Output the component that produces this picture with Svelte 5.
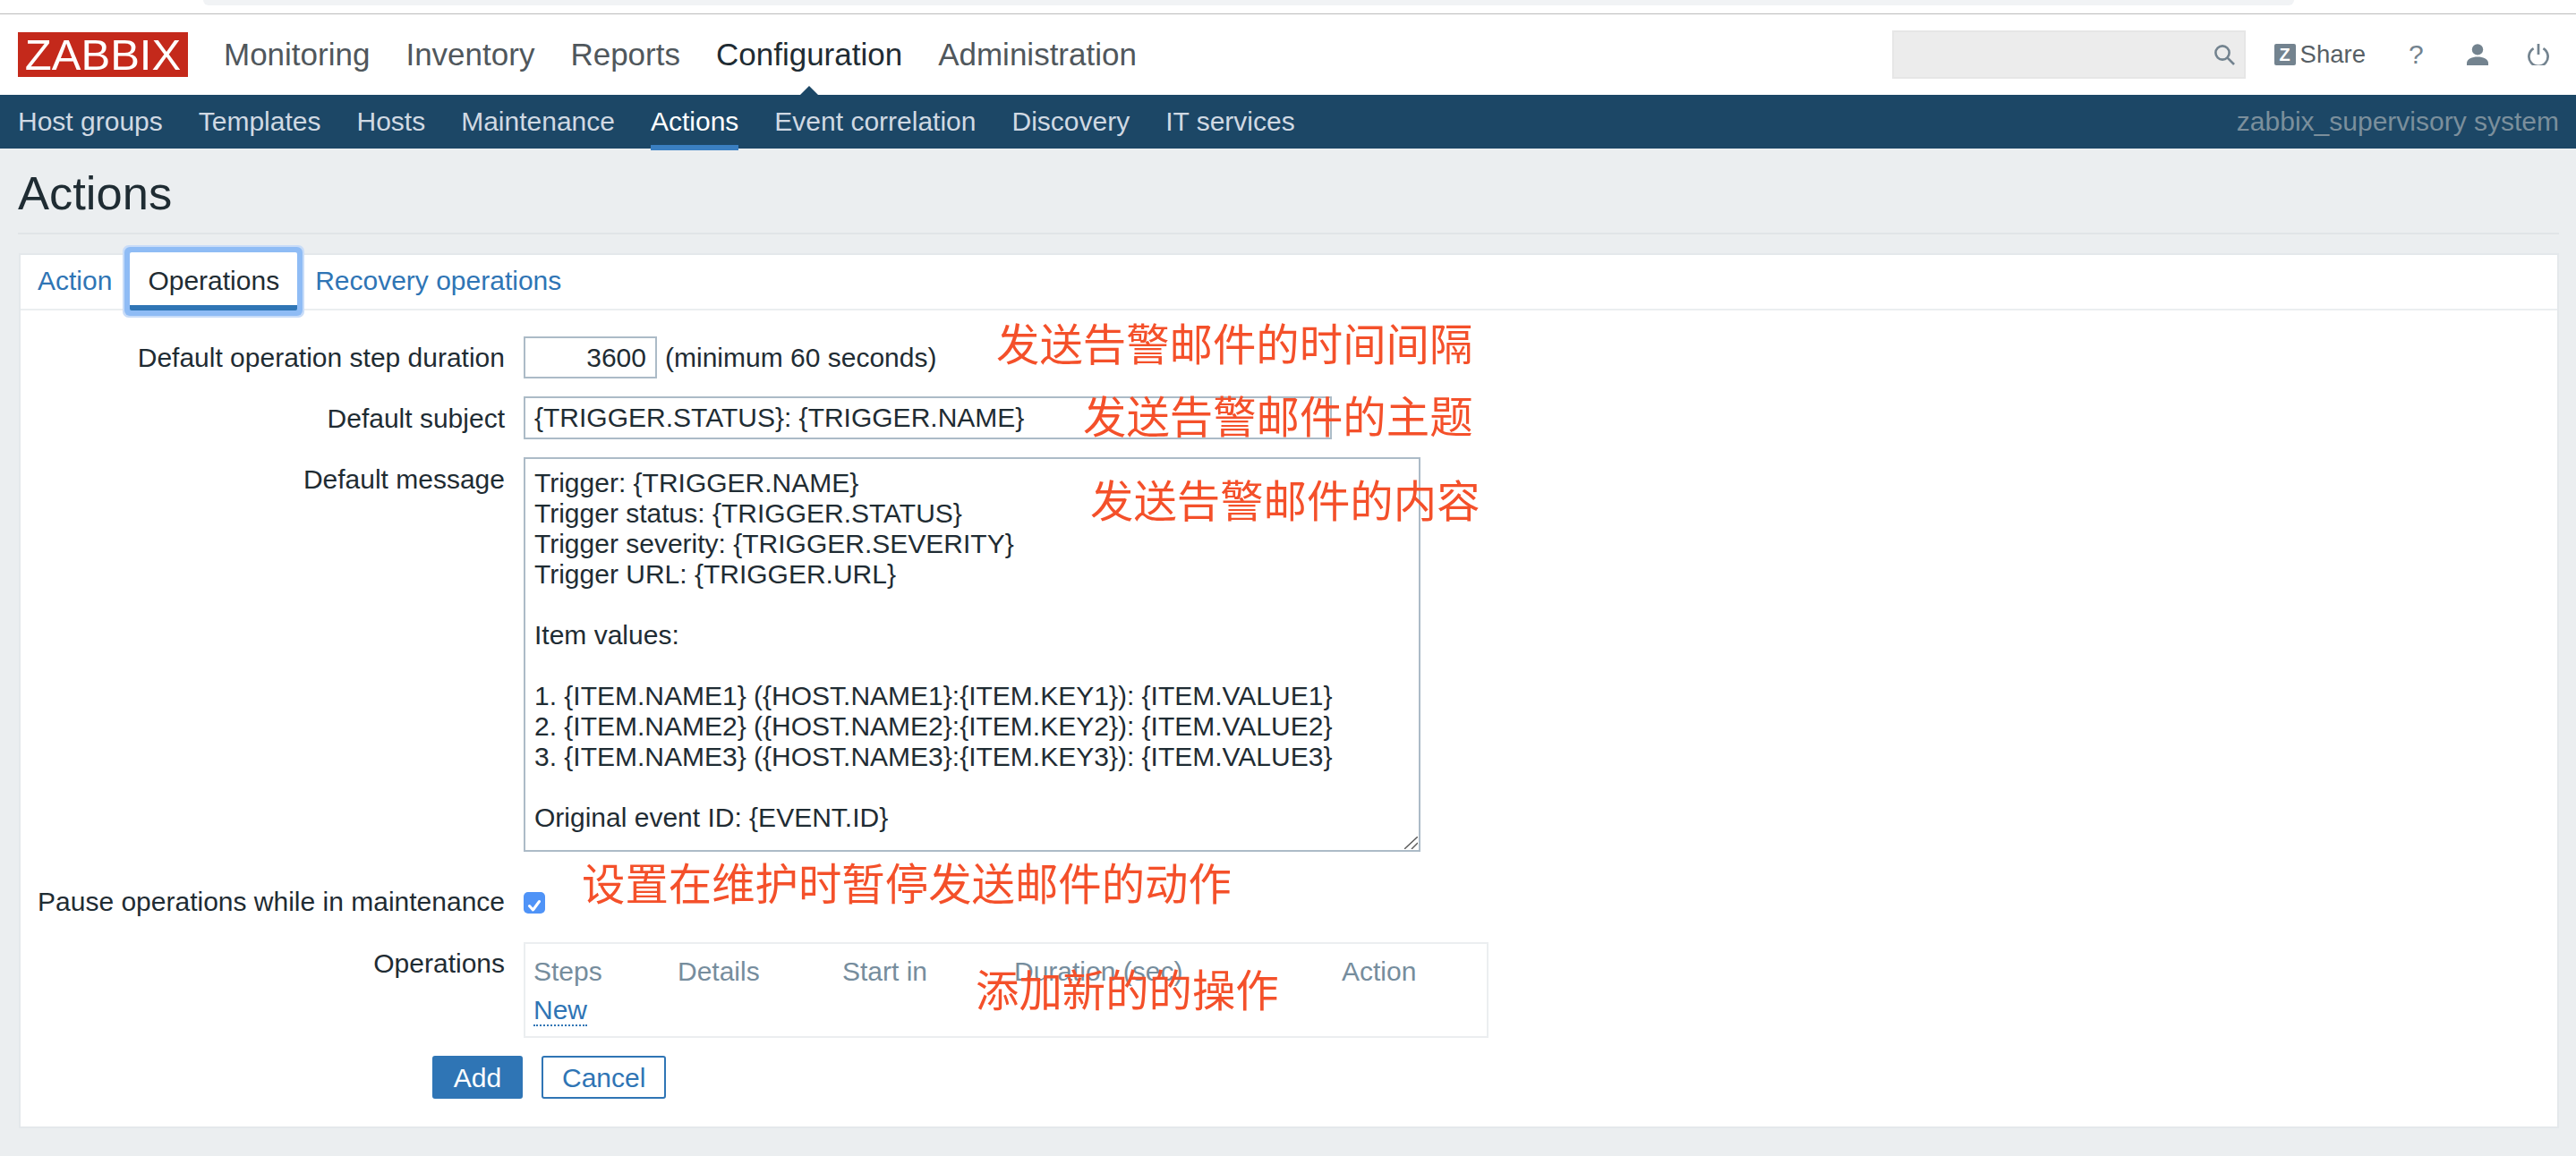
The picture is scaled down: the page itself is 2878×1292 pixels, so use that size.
<script>
  const mainMenu = ['Monitoring', 'Inventory', 'Reports', 'Configuration', 'Administration'];
  const subMenu = ['Host groups', 'Templates', 'Hosts', 'Maintenance', 'Actions', 'Event correlation', 'Discovery', 'IT services'];
  const columns = [
    { label: 'Steps', width: 161 },
    { label: 'Details', width: 184 },
    { label: 'Start in', width: 192 },
    { label: 'Duration (sec)', width: 366 },
    { label: 'Action', width: 150 }
  ];

  const message = `Trigger: {TRIGGER.NAME}
Trigger status: {TRIGGER.STATUS}
Trigger severity: {TRIGGER.SEVERITY}
Trigger URL: {TRIGGER.URL}

Item values:

1. {ITEM.NAME1} ({HOST.NAME1}:{ITEM.KEY1}): {ITEM.VALUE1}
2. {ITEM.NAME2} ({HOST.NAME2}:{ITEM.KEY2}): {ITEM.VALUE2}
3. {ITEM.NAME3} ({HOST.NAME3}:{ITEM.KEY3}): {ITEM.VALUE3}

Original event ID: {EVENT.ID}`;

  // hand-written notes laid over the screenshot
  const notes = [
    { text: '发送告警邮件的时间间隔', x: 1113, y: 382 },
    { text: '发送告警邮件的主题', x: 1210, y: 463 },
    { text: '发送告警邮件的内容', x: 1218, y: 557 },
    { text: '设置在维护时暂停发送邮件的动作', x: 650, y: 985 },
    { text: '添加新的的操作', x: 1090, y: 1104 }
  ];
</script>

<div class="page">
  <div class="browserStrip"><div class="urlBar"></div></div>

  <header class="topNav">
    <div class="logo">ZABBIX</div>
    <nav class="mainMenu">
      {#each mainMenu as item}
        <span class="mainItem" class:current={item === 'Configuration'}>{item}</span>
      {/each}
    </nav>
    <div class="tools">
      <div class="search">
        <svg viewBox="0 0 24 24" width="24" height="24" fill="none" stroke="#73838f" stroke-width="2.6">
          <circle cx="10" cy="10" r="7.6" />
          <path d="M15.4 15.4 23 23" />
        </svg>
      </div>
      <span class="share">
        <span class="shareBox">Z</span>Share
      </span>
      <span class="help">?</span>
      <svg class="toolIcon" viewBox="0 0 24 24" width="24" height="24" fill="#73838f">
        <circle cx="12" cy="6.4" r="6.2" />
        <path d="M0 24v-2.4C0 17 6 14.6 12 14.6s12 2.4 12 7V24z" />
      </svg>
      <svg class="toolIcon" viewBox="0 0 24 24" width="24" height="24" fill="none" stroke="#73838f" stroke-width="2.7">
        <path d="M6.6 5.2a10.6 10.6 0 1 0 10.8 0" />
        <path d="M12 0v12" />
      </svg>
    </div>
  </header>

  <nav class="subNav">
    {#each subMenu as item}
      <span class="subItem" class:current={item === 'Actions'}>{item}</span>
    {/each}
    <span class="serverName">zabbix_supervisory system</span>
  </nav>

  <main class="content">
    <div class="titleRow"><h1>Actions</h1></div>

    <section class="card">
      <div class="tabs">
        <span class="tab">Action</span>
        <span class="tab focused">Operations</span>
        <span class="tab">Recovery operations</span>
      </div>

      <form class="form" on:submit|preventDefault>
        <div class="row">
          <label class="firstLabel" for="stepDuration">Default operation step duration</label>
          <div class="control">
            <input id="stepDuration" class="stepInput" value="3600" />
            <span class="hint">(minimum 60 seconds)</span>
          </div>
        </div>
        <div class="row">
          <label for="subject">Default subject</label>
          <input id="subject" class="subjectInput" value={'{TRIGGER.STATUS}: {TRIGGER.NAME}'} />
        </div>
        <div class="row">
          <label for="messageText">Default message</label>
          <div class="messageBox">
            <textarea id="messageText" class="messageInput" spellcheck="false" value={message}></textarea>
            <svg class="resizer" viewBox="0 0 15 14" width="15" height="14" fill="none" stroke="#5a5a5a" stroke-width="1.4">
              <path d="M0 14 15 0" />
              <path d="M8 14 15 7" />
            </svg>
          </div>
        </div>
        <div class="row pauseRow">
          <label for="pause">Pause operations while in maintenance</label>
          <span id="pause" class="checkbox">
            <svg viewBox="0 0 24 24" width="24" height="24" fill="none" stroke="#fff" stroke-width="3" stroke-linecap="round" stroke-linejoin="round">
              <path d="M6.5 12.5 10.5 17 17.5 7.5" />
            </svg>
          </span>
        </div>
        <div class="row">
          <label class="firstLabel" for="operationsList">Operations</label>
          <div id="operationsList" class="opsTable">
            <div class="opsHead">
              {#each columns as col}
                <span class="opsCol" style="width: {col.width}px">{col.label}</span>
              {/each}
            </div>
            <span class="newLink">New</span>
          </div>
        </div>
        <div class="row">
          <span></span>
          <div class="buttons">
            <button type="submit" class="btn primary">Add</button>
            <button type="button" class="btn">Cancel</button>
          </div>
        </div>
      </form>
    </section>
  </main>

  {#each notes as note}
    <span class="note" style="left: {note.x}px; top: {note.y}px">{note.text}</span>
  {/each}
</div>

<style>
  :global(body) {
    margin: 0;
    background: #ebeef0;
  }

  .page {
    position: relative;
    width: 2878px;
    height: 1292px;
    overflow: hidden;
    background: #ebeef0;
    color: #1f2c33;
    font-family: 'Liberation Sans', Arial, sans-serif;
    font-size: 30px;
  }

  .browserStrip {
    height: 15px;
    padding-left: 227px;
    background: #fff;
    border-bottom: 1px solid #bcbcbc;
  }

  .urlBar {
    width: 2336px;
    height: 6px;
    background: #f1f3f5;
    border-radius: 0 0 14px 14px;
  }

  .topNav {
    display: flex;
    align-items: center;
    height: 90px;
    padding: 0 30px 0 20px;
    background: #fff;
  }

  .logo {
    width: 190px;
    height: 50px;
    background: #c4291b;
    color: #fff;
    font-size: 49px;
    line-height: 50px;
    text-align: center;
  }

  .mainMenu {
    display: flex;
    gap: 40px;
    margin-left: 40px;
    font-size: 35px;
    color: #50575c;
  }

  .mainItem.current {
    position: relative;
    color: #1f2c33;
  }

  .mainItem.current::after {
    content: '';
    position: absolute;
    left: 50%;
    bottom: -31px;
    margin-left: -16px;
    border: 16px solid transparent;
    border-top: 0;
    border-bottom-color: #1c4766;
  }

  .tools {
    display: flex;
    align-items: center;
    margin-left: auto;
  }

  .search {
    display: flex;
    align-items: center;
    justify-content: flex-end;
    box-sizing: border-box;
    width: 395px;
    height: 54px;
    padding-right: 10px;
    background: #ececec;
    border: 2px solid #e6e6e6;
  }

  .share {
    display: flex;
    align-items: center;
    margin-left: 32px;
    font-size: 27.5px;
    color: #575f65;
  }

  .shareBox {
    width: 24px;
    height: 24px;
    margin-right: 5px;
    background: #73838f;
    border-radius: 2px;
    color: #fff;
    font-size: 20px;
    font-weight: bold;
    line-height: 24px;
    text-align: center;
  }

  .help {
    margin-left: 48px;
    width: 18px;
    font-size: 30px;
    color: #73838f;
  }

  .toolIcon {
    margin-left: 44px;
  }

  .help + .toolIcon {
    margin-left: 47px;
  }

  .subNav {
    display: flex;
    align-items: center;
    gap: 40px;
    height: 60px;
    padding: 0 19px 0 20px;
    background: #1c4766;
    color: #d0d9e3;
  }

  .subItem {
    position: relative;
    line-height: 60px;
  }

  .subItem.current {
    color: #fff;
  }

  .subItem.current::after {
    content: '';
    position: absolute;
    left: 0;
    right: 0;
    bottom: -2px;
    height: 6px;
    background: #3a7fc1;
  }

  .serverName {
    margin-left: auto;
    color: #7b8f9c;
  }

  .content {
    padding: 0 19px 0 20px;
  }

  .titleRow {
    height: 94px;
    border-bottom: 2px solid #e0e4e7;
  }

  h1 {
    margin: 0;
    padding-top: 20px;
    font-size: 52.5px;
    font-weight: normal;
    line-height: 60px;
    color: #1f2c33;
  }

  .card {
    box-sizing: border-box;
    height: 978px;
    margin-top: 21px;
    margin-left: 1px;
    background: #fff;
    border: 2px solid #e4e8eb;
  }

  .tabs {
    display: flex;
    height: 60px;
    border-bottom: 2px solid #ebeef0;
  }

  .tab {
    box-sizing: border-box;
    height: 65px;
    margin-top: -3px;
    padding: 0 20px;
    color: #2f75b5;
    line-height: 64px;
  }

  .tab:first-child {
    padding-left: 19px;
  }

  .tab.focused {
    position: relative;
    background: #fff;
    color: #1f2c33;
    border-bottom: 6px solid #2f75b5;
    box-shadow: 0 0 0 6px #8fbcf5, 0 0 0 8px #c8dcf8;
    border-radius: 2px;
  }

  .form {
    display: flex;
    flex-direction: column;
    gap: 20px;
    padding-top: 29px;
  }

  .row {
    display: grid;
    grid-template-columns: 541px 1fr;
    column-gap: 21px;
    align-items: start;
  }

  label {
    padding-top: 8px;
    line-height: 34px;
    text-align: right;
  }

  .firstLabel {
    padding-top: 7px;
  }

  .control {
    display: flex;
    align-items: center;
    gap: 9px;
  }

  input,
  textarea {
    box-sizing: border-box;
    margin: 0;
    background: #fff;
    border: 2px solid #acbbc7;
    border-radius: 0;
    color: #1f2c33;
    font: inherit;
    outline: none;
  }

  .stepInput {
    width: 149px;
    height: 47px;
    padding: 0 10px;
    text-align: right;
  }

  .hint {
    color: #1f2c33;
  }

  .subjectInput {
    width: 903px;
    height: 48px;
    padding: 0 10px;
  }

  .messageBox {
    position: relative;
    width: 1002px;
  }

  .messageInput {
    display: block;
    width: 1002px;
    height: 441px;
    padding: 10px 10px 0;
    line-height: 34px;
    overflow: hidden;
    resize: none;
  }

  .resizer {
    position: absolute;
    right: 3px;
    bottom: 3px;
  }

  .pauseRow {
    padding-bottom: 8px;
  }

  .pauseRow label {
    padding-top: 19px;
  }

  .checkbox {
    display: block;
    width: 24px;
    height: 24px;
    margin-top: 25px;
    background: #4f93f7;
    border-radius: 5px;
  }

  .opsTable {
    box-sizing: border-box;
    width: 1078px;
    height: 107px;
    padding: 14px 9px;
    border: 2px solid #ebeef0;
  }

  .opsHead {
    display: flex;
    height: 43px;
    color: #768d9d;
    line-height: 34px;
  }

  .opsCol {
    flex: none;
  }

  .newLink {
    color: #2f75b5;
    line-height: 34px;
    border-bottom: 2px dotted #2f75b5;
  }

  .buttons {
    display: flex;
    gap: 21px;
    margin-left: -102px;
  }

  .btn {
    box-sizing: border-box;
    height: 48px;
    padding: 2px 21px 0;
    background: #fff;
    border: 2px solid #2f75b5;
    border-radius: 3px;
    color: #2f75b5;
    font: inherit;
    line-height: 42px;
  }

  .btn.primary {
    width: 101px;
    padding: 2px 0 0;
    background: #2f75b5;
    color: #fff;
  }

  .note {
    position: absolute;
    transform: translateY(-50%);
    color: #f4502a;
    font-family: 'Noto Sans CJK SC', sans-serif;
    font-size: 48.4px;
    font-weight: 400;
    line-height: 1;
    white-space: nowrap;
  }
</style>
